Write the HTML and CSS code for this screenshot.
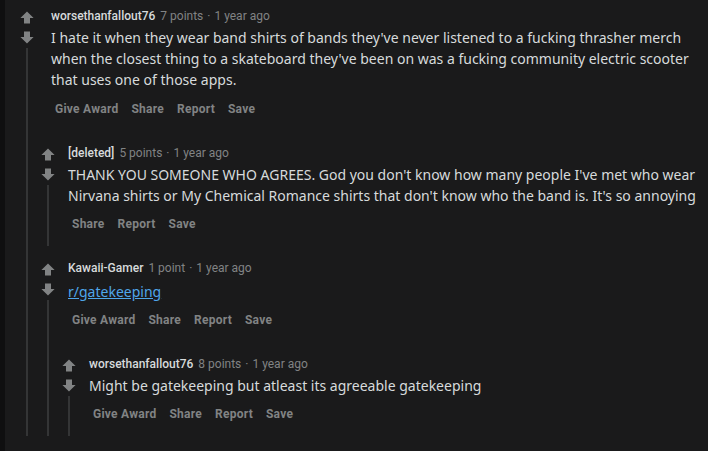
FILE: index.html
```html
<!DOCTYPE html>
<html>
<head>
<meta charset="utf-8">
<link rel="stylesheet" href="styles.css">
</head>
<body>
<div class="page">
  <div class="comment top">
    <div class="vote">
      <span class="arrow"><svg viewBox="0 0 14 13" width="14" height="13"><path d="M7 0.5 L13.6 7 H10 V12.6 H4 V7 H0.4 Z"/></svg></span>
      <span class="arrow"><svg viewBox="0 0 14 13" width="14" height="13"><path d="M7 12.5 L13.6 6 H10 V0.4 H4 V6 H0.4 Z"/></svg></span>
      <div class="line"></div>
    </div>
    <div class="content">
      <div class="main">
        <div class="meta"><span class="author">worsethanfallout76</span><span class="score">7 points</span><span class="dot">·</span><span class="time">1 year ago</span></div>
        <div class="text">I hate it when they wear band shirts of bands they've never listened to a fucking thrasher merch when the closest thing to a skateboard they've been on was a fucking community electric scooter that uses one of those apps.</div>
        <div class="actions"><span class="action">Give Award</span><span class="action">Share</span><span class="action">Report</span><span class="action">Save</span></div>
      </div>
      <div class="children">
        <div class="comment">
          <div class="vote">
            <span class="arrow"><svg viewBox="0 0 14 13" width="14" height="13"><path d="M7 0.5 L13.6 7 H10 V12.6 H4 V7 H0.4 Z"/></svg></span>
            <span class="arrow"><svg viewBox="0 0 14 13" width="14" height="13"><path d="M7 12.5 L13.6 6 H10 V0.4 H4 V6 H0.4 Z"/></svg></span>
            <div class="line"></div>
          </div>
          <div class="content">
            <div class="main">
              <div class="meta"><span class="author">[deleted]</span><span class="score">5 points</span><span class="dot">·</span><span class="time">1 year ago</span></div>
              <div class="text">THANK YOU SOMEONE WHO AGREES. God you don't know how many people I've met who wear Nirvana shirts or My Chemical Romance shirts that don't know who the band is. It's so annoying</div>
              <div class="actions"><span class="action">Share</span><span class="action">Report</span><span class="action">Save</span></div>
            </div>
          </div>
        </div>
        <div class="comment">
          <div class="vote">
            <span class="arrow"><svg viewBox="0 0 14 13" width="14" height="13"><path d="M7 0.5 L13.6 7 H10 V12.6 H4 V7 H0.4 Z"/></svg></span>
            <span class="arrow"><svg viewBox="0 0 14 13" width="14" height="13"><path d="M7 12.5 L13.6 6 H10 V0.4 H4 V6 H0.4 Z"/></svg></span>
            <div class="line"></div>
          </div>
          <div class="content">
            <div class="main">
              <div class="meta"><span class="author">Kawaii-Gamer</span><span class="score">1 point</span><span class="dot">·</span><span class="time">1 year ago</span></div>
              <div class="text link-text"><a class="link" href="#">r/gatekeeping</a></div>
              <div class="actions"><span class="action">Give Award</span><span class="action">Share</span><span class="action">Report</span><span class="action">Save</span></div>
            </div>
            <div class="children">
              <div class="comment">
                <div class="vote">
                  <span class="arrow"><svg viewBox="0 0 14 13" width="14" height="13"><path d="M7 0.5 L13.6 7 H10 V12.6 H4 V7 H0.4 Z"/></svg></span>
                  <span class="arrow"><svg viewBox="0 0 14 13" width="14" height="13"><path d="M7 12.5 L13.6 6 H10 V0.4 H4 V6 H0.4 Z"/></svg></span>
                  <div class="line"></div>
                </div>
                <div class="content">
                  <div class="main">
                    <div class="meta"><span class="author">worsethanfallout76</span><span class="score">8 points</span><span class="dot">·</span><span class="time">1 year ago</span></div>
                    <div class="text">Might be gatekeeping but atleast its agreeable gatekeeping</div>
                    <div class="actions"><span class="action">Give Award</span><span class="action">Share</span><span class="action">Report</span><span class="action">Save</span></div>
                  </div>
                </div>
              </div>
            </div>
          </div>
        </div>
      </div>
    </div>
  </div>
</div>
</body>
</html>
```

FILE: styles.css
```css
html, body {
  margin: 0;
  padding: 0;
  background: #1a1a1b;
  height: 100%;
}
.page {
  min-height: 100%;
  box-sizing: border-box;
  border-left: 5px solid #0f0f10;
  padding-left: 11px;
  padding-right: 8px;
}
.comment {
  display: flex;
  padding-top: 14px;
}
.comment.top {
  padding-top: 8px;
}
.vote {
  width: 21px;
  flex: none;
  display: flex;
  flex-direction: column;
  align-items: center;
}
.arrow {
  height: 18px;
  display: flex;
  align-items: center;
  justify-content: center;
}
.arrow + .arrow {
  margin-top: 2px;
}
.arrow svg {
  fill: #818384;
  display: block;
}
.line {
  flex: 1;
  width: 2px;
  margin-top: 2px;
  background: #343536;
}
.content {
  flex: 1;
  min-width: 0;
}
.main {
  padding-left: 10px;
  padding-bottom: 10px;
}
.top > .content > .main {
  padding-left: 14px;
}
.top > .content > .main > .actions {
  margin-top: 7px;
}
.meta {
  font-family: Roboto, "Liberation Sans", sans-serif;
  font-size: 12px;
  line-height: 16px;
  color: #818384;
  white-space: nowrap;
}
.author {
  color: #d7dadc;
  font-weight: 500;
  margin-right: 5px;
}
.dot {
  margin: 0 4px;
}
.text {
  margin-top: 3px;
  font-family: "Noto Sans", "Open Sans", sans-serif;
  font-size: 14px;
  line-height: 21px;
  color: #d7dadc;
}
.link-text {
  margin-top: 5px;
}
.link {
  color: #4fa6ea;
  text-decoration: underline;
}
.actions {
  margin-top: 6px;
  height: 24px;
  display: flex;
  align-items: center;
  gap: 5px;
}
.action {
  font-family: Roboto, "Liberation Sans", sans-serif;
  font-weight: 700;
  font-size: 12px;
  line-height: 16px;
  letter-spacing: 0.25px;
  color: #818384;
  padding: 4px 4px;
}
```
